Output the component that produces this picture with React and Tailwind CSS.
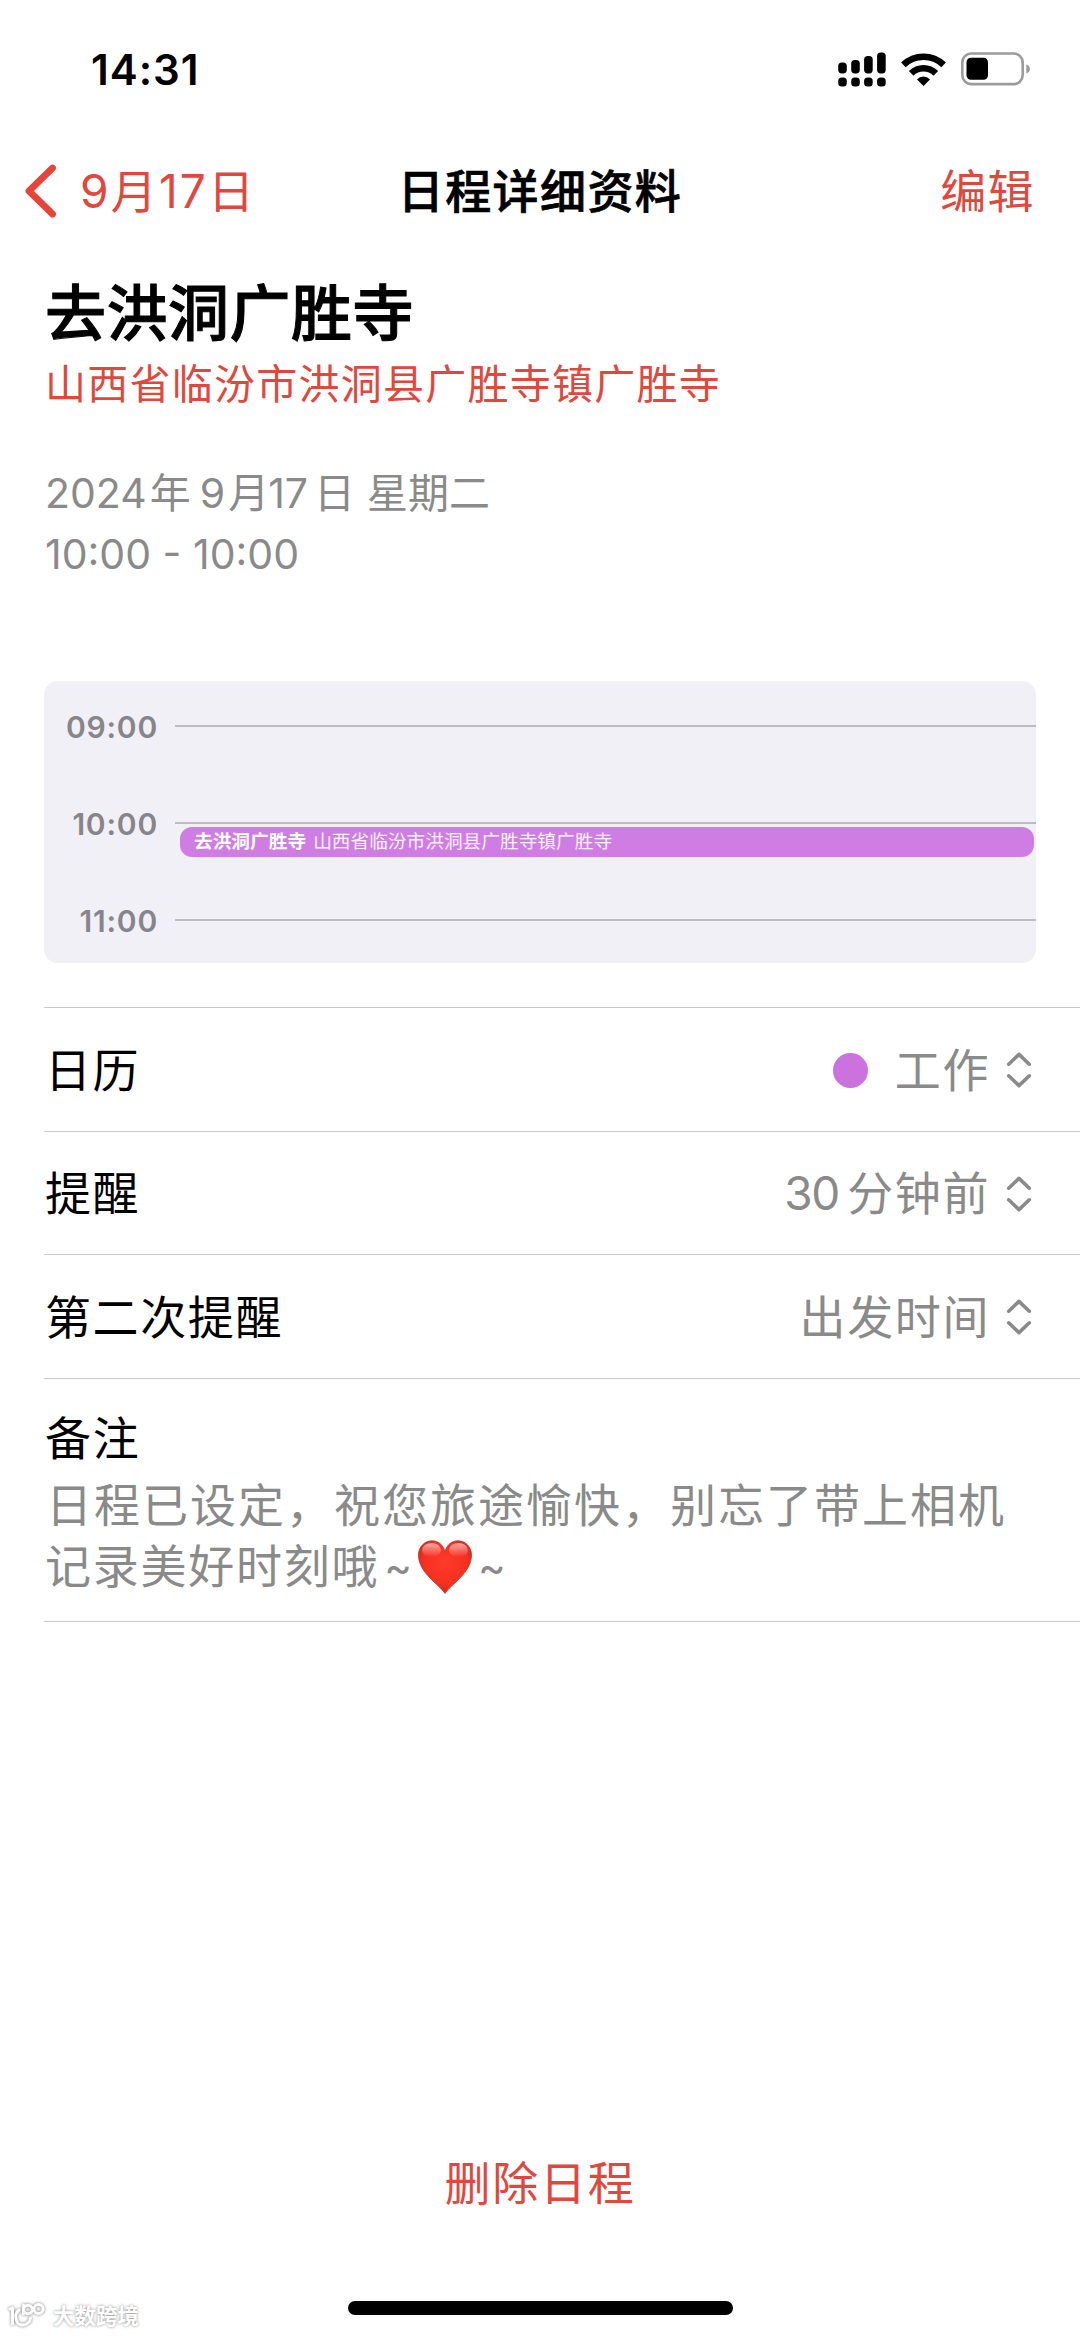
import React from 'react';
import clsx from 'clsx';

const hours = [
  { label: '09:00', gap: 'mt-[34px]' },
  { label: '10:00', gap: 'mt-[73px]' },
  { label: '11:00', gap: 'mt-[73px]' },
];

const Signal = () => (
  <svg width="48" height="35" viewBox="0 0 48 35" fill="currentColor">
    <rect x="0.2" y="10.6" width="8.6" height="10.8" rx="3.6" />
    <rect x="13.2" y="8" width="8.6" height="13.4" rx="3.6" />
    <rect x="26.1" y="4" width="8.6" height="17.4" rx="3.6" />
    <rect x="39.1" y="0.6" width="8.6" height="20.8" rx="3.6" />
    <rect x="0.2" y="25.4" width="8.6" height="9.2" rx="3.6" />
    <rect x="13.2" y="25.4" width="8.6" height="9.2" rx="3.6" />
    <rect x="26.1" y="25.4" width="8.6" height="9.2" rx="3.6" />
    <rect x="39.1" y="25.4" width="8.6" height="9.2" rx="3.6" />
  </svg>
);

const Wifi = () => (
  <svg width="45" height="33" viewBox="0 0 45 33">
    <g fill="none" stroke="currentColor" strokeWidth="6.6">
      <path d="M2.4 11.9A29 29 0 0 1 42.6 11.9" />
      <path d="M10.2 20.4A17.4 17.4 0 0 1 34.8 20.4" />
    </g>
    <path d="M22.5 33L16 26.4A9 9 0 0 1 29 26.4Z" fill="currentColor" />
  </svg>
);

const Battery = () => (
  <svg width="70" height="34" viewBox="0 0 70 34">
    <rect x="1.3" y="1.5" width="60.4" height="30.6" rx="9" fill="none" stroke="#9c9c9c" strokeWidth="2.6" />
    <rect x="5.5" y="5.8" width="21.5" height="22" rx="4.5" fill="#000" />
    <path d="M65.3 12.4C70.2 14 70.2 19.8 65.3 21.4Z" fill="#9c9c9c" />
  </svg>
);

const UpDown = () => (
  <svg
    width="26"
    height="38"
    viewBox="0 0 26 38"
    fill="none"
    stroke="#8a8a8a"
    strokeWidth="3.6"
    strokeLinecap="round"
    strokeLinejoin="round"
  >
    <path d="M2.7 13.2L13 3.4L23.3 13.2" />
    <path d="M2.7 24.8L13 34.6L23.3 24.8" />
  </svg>
);

const Heart = () => (
  <svg width="54" height="54" viewBox="0 0 54 54" className="mx-[6px]">
    <defs>
      <radialGradient id="heart" cx="0.5" cy="0.42" r="0.62">
        <stop offset="0" stopColor="#ff3a2c" />
        <stop offset="0.65" stopColor="#f6301f" />
        <stop offset="1" stopColor="#c9281f" />
      </radialGradient>
      <linearGradient id="shine" x1="0" y1="0" x2="0" y2="1">
        <stop offset="0" stopColor="#fff" stopOpacity="0.6" />
        <stop offset="1" stopColor="#fff" stopOpacity="0" />
      </linearGradient>
    </defs>
    <path
      d="M27 53.5C21 44 0.5 33 0.5 15C0.5 6.5 7 0.8 14 0.8C20 0.8 25 4.5 27 11.5C29 4.5 34 0.8 40 0.8C47 0.8 53.5 6.5 53.5 15C53.5 33 33 44 27 53.5Z"
      fill="url(#heart)"
      stroke="#b9322b"
      strokeWidth="0.8"
    />
    <ellipse cx="13.5" cy="10" rx="9.5" ry="7" fill="url(#shine)" />
    <ellipse cx="40.5" cy="10" rx="9.5" ry="7" fill="url(#shine)" />
  </svg>
);

const Row = ({ label, dot, children, className }) => (
  <div className={clsx('flex items-center justify-between border-t border-[#c9c9cb] pl-[1px] pr-[48px] pt-[1px]', className)}>
    <span className="tracking-[1.6px]">{label}</span>
    <div className="flex items-center text-[#8a8a8a] tracking-[1.6px]">
      {dot && <span className="mr-[27px] size-[35px] rounded-full bg-[#cb72df]" />}
      <span className="mr-[16px]">{children}</span>
      <UpDown />
    </div>
  </div>
);

const App = () => {
  return (
    <div className="relative flex h-[2337px] w-[1080px] flex-col overflow-hidden bg-white font-['Inter','Noto_Sans_CJK_SC',sans-serif] text-[46px] text-black">
      {/* Status bar */}
      <div className="flex h-[138px] items-center justify-between pl-[91px] pr-[49px]">
        <span className="text-[42px] font-semibold tracking-[1px]">14:31</span>
        <div className="flex items-center">
          <Signal />
          <div className="ml-[15px] mr-[15px]">
            <Wifi />
          </div>
          <Battery />
        </div>
      </div>

      {/* Navigation */}
      <div className="grid h-[106px] grid-cols-[1fr_auto_1fr] items-center px-[45px]">
        <div className="-ml-[22px] flex items-center text-[#e0483e]">
          <svg width="34" height="54" viewBox="0 0 34 54" fill="none" stroke="#e8443a" strokeWidth="6.8" strokeLinecap="round" strokeLinejoin="round">
            <path d="M29.500 4L6 27L29.500 50" />
          </svg>
          <span className="ml-[23px] tracking-[2.2px]">9月17日</span>
        </div>
        <h1 className="font-medium tracking-[1.4px] [-webkit-text-stroke:0.7px_#000]">日程详细资料</h1>
        <span className="text-right text-[#e0483e] tracking-[1.4px]">编辑</span>
      </div>

      {/* Event summary */}
      <div className="flex flex-col px-[45px] pt-[35px]">
        <h2 className="text-[61px] font-medium leading-[70px] tracking-[0.5px] [-webkit-text-stroke:1px_#000]">去洪洞广胜寺</h2>
        <p className="mt-[5px] text-[41px] leading-[60px] tracking-[1.25px] text-[#e0483e]">
          山西省临汾市洪洞县广胜寺镇广胜寺
        </p>
        <div className="mt-[49px] text-[41px] leading-[60px] text-[#8a8a8a]">
          <p>
            2024<span className="ml-[3px] mr-[9px]">年</span>9<span className="ml-[3px] mr-[-1px]">月</span>17
            <span className="ml-[6px]">日</span>
            <span className="ml-[12px]">星期二</span>
          </p>
          <p className="mt-[1px]">10:00 - 10:00</p>
        </div>
      </div>

      {/* Day timeline */}
      <div className="relative mx-[44px] mt-[97px] flex h-[282px] flex-col rounded-[14px] bg-[#f1f0f6]">
        {hours.map((hour) => (
          <div key={hour.label} className={clsx('flex h-[24px] items-center', hour.gap)}>
            <span className="w-[114px] text-right text-[30px] font-semibold leading-[24px] tracking-[0.8px] text-[#86858b]">
              {hour.label}
            </span>
            <div className="mb-[2px] ml-[17px] h-[2px] flex-1 bg-[#bdbcc2]" />
          </div>
        ))}
        <div className="absolute left-[136px] right-[2px] top-[146px] flex h-[30px] items-center rounded-[12px] bg-[#cf7de2] pl-[14px] pt-[1px] text-[18.7px] text-white">
          <span className="font-bold">去洪洞广胜寺</span>
          <span className="ml-[7px] text-white/90">山西省临汾市洪洞县广胜寺镇广胜寺</span>
        </div>
      </div>

      {/* Settings */}
      <div className="ml-[44px] mt-[44px] flex flex-col">
        <Row label="日历" dot className="h-[124px]">
          工作
        </Row>
        <Row label="提醒" className="h-[123px]">
          <span className="tracking-[-1.2px]">30</span>
          <span className="ml-[8px]">分钟前</span>
        </Row>
        <Row label="第二次提醒" className="h-[124px]">
          出发时间
        </Row>
        <div className="h-[244px] border-y border-[#c9c9cb] pl-[1px] pt-[29px] leading-[61px] tracking-[1.75px]">
          <p>备注</p>
          <div className="mt-[6px] text-[#8a8a8a]">
            <p className="pl-[1px] tracking-[2px]">日程已设定，祝您旅途愉快，别忘了带上相机</p>
            <div className="flex items-center">
              <span>记录美好时刻哦</span>
              <span className="ml-[5px] text-[42px] tracking-normal">~</span>
              <Heart />
              <span className="text-[42px] tracking-normal">~</span>
            </div>
          </div>
        </div>
      </div>

      {/* Footer */}
      <div className="mt-auto flex flex-col items-center pb-[22px]">
        <span className="leading-[60px] tracking-[1.8px] text-[#e0483e]">删除日程</span>
        <div className="mt-[88px] h-[14px] w-[385px] rounded-full bg-black" />
      </div>

      {/* Watermark */}
      <div className="absolute bottom-[6px] left-[9px] flex items-center text-white">
        <svg width="40" height="30" viewBox="0 0 40 30" fill="none" stroke="#fff" strokeWidth="3" strokeLinecap="round" strokeLinejoin="round" className="overflow-visible drop-shadow-[0_0_1.5px_#777]">
          <path d="M1 8L3.500 7V23" />
          <path d="M10 9C4 14 7 24 13.500 24C18 24 21 21 21.500 17" />
          <path d="M14.500 4V13" />
          <circle cx="19" cy="8.500" r="4.300" />
          <circle cx="29.500" cy="8" r="4.600" />
        </svg>
        <span className="ml-[4px] text-[21.5px] font-bold leading-[30px] [text-shadow:0_0_3px_#888]">大数跨境</span>
      </div>
    </div>
  );
};

export default App;
